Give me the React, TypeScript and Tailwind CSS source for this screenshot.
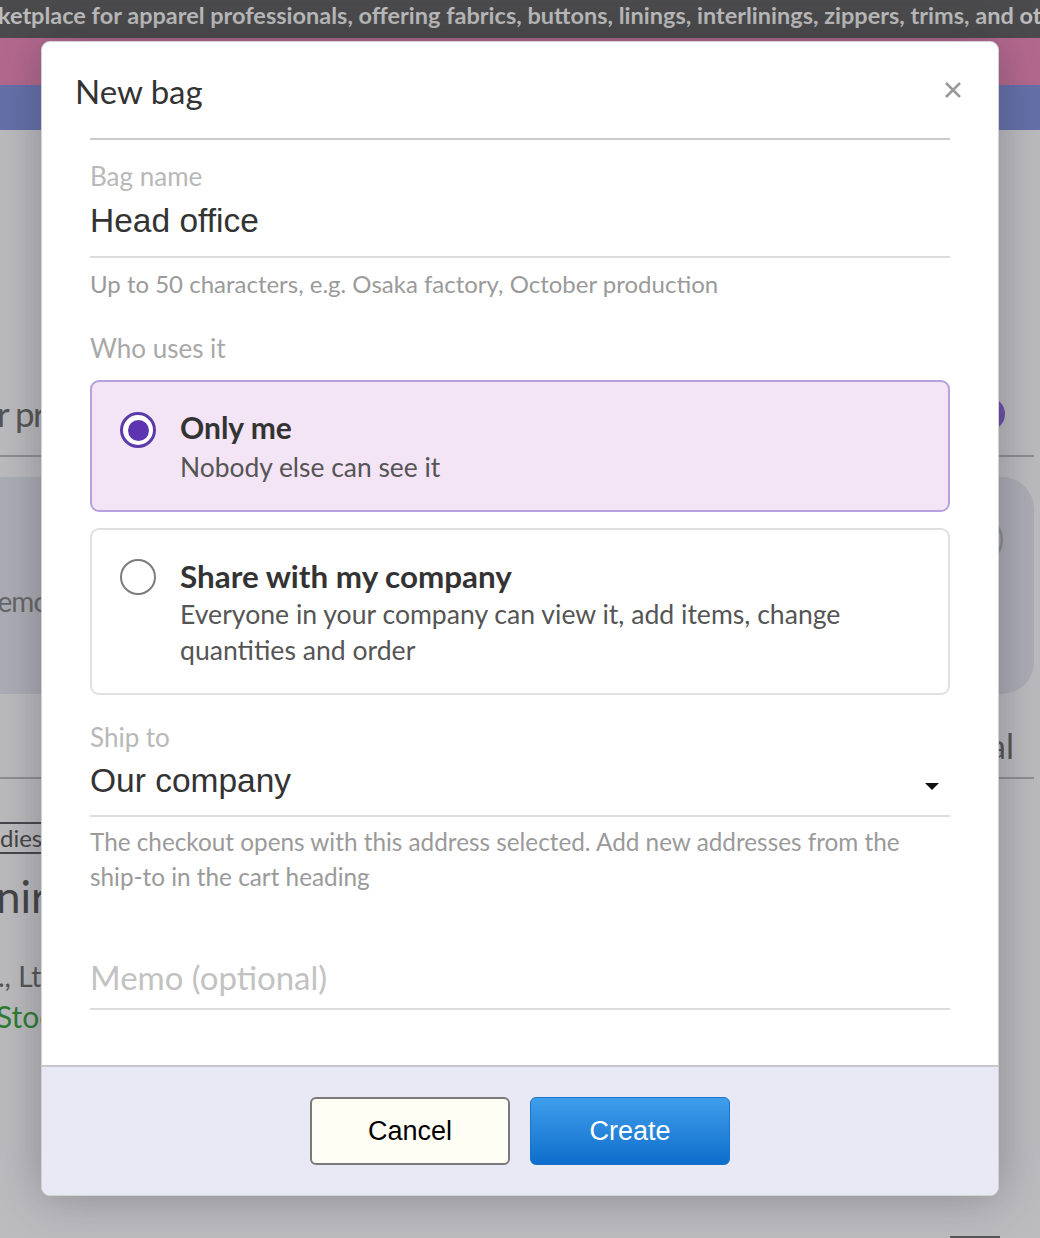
import React from "react";

function CloseIcon() {
  return (
    <svg width="20" height="20" viewBox="0 0 20 20" aria-hidden="true">
      <path d="M3 3 L17 17 M17 3 L3 17" stroke="#9a9a9a" strokeWidth="2.6" strokeLinecap="butt" />
    </svg>
  );
}

function Caret() {
  return (
    <svg width="16" height="9" viewBox="0 0 16 9" aria-hidden="true">
      <path d="M1 1 L15 1 L8 8 Z" fill="#111" />
    </svg>
  );
}

function Radio({ checked }: { checked: boolean }) {
  if (checked) {
    return (
      <span className="flex h-9 w-9 shrink-0 items-center justify-center rounded-full border-[3px] border-[#5b3aa9] bg-white">
        <span className="block h-[21px] w-[21px] rounded-full bg-[#5e35b1]" />
      </span>
    );
  }
  return <span className="block h-9 w-9 shrink-0 rounded-full border-2 border-[#7c7c7c] bg-white" />;
}

function BackgroundPage() {
  return (
    <div className="flex h-full flex-col">
      <div className="h-[38px] overflow-hidden whitespace-nowrap bg-[#4b4b4d] text-[23.5px] font-bold leading-[31px] text-[#bdbdbd]">
        <span className="-ml-[2px]">
          ketplace for apparel professionals, offering fabrics, buttons, linings, interlinings, zippers, trims, and other supplies
        </span>
      </div>
      <div className="h-[47px] bg-[#b4698e]" />
      <div className="h-[45px] bg-[#6570aa]" />
      <div className="flex flex-1 flex-col bg-[#bcbcbf] pr-[6px]">
        {/* heading row with avatar */}
        <div className="mt-[263px] flex h-[64px] items-center justify-between border-b-2 border-[#8f8f92]">
          <span className="-ml-[3px] mb-[22px] text-[35px] leading-none tracking-[-1.5px] text-[#555]">r products</span>
          <span className="mb-[20px] mr-[29px] block h-[34px] w-[34px] rounded-full bg-[#6b4fa9]" />
        </div>
        {/* summary card */}
        <div className="mt-[20px] flex h-[217px] items-center justify-between rounded-r-[32px] bg-[#adadb6]">
          <span className="-ml-[27px] mt-[30px] text-[28px] tracking-[-1px] text-[#666]">Memo</span>
          <span className="mr-[30px] -mt-[95px] text-[28px] text-[#8a8a90]">)</span>
        </div>
        {/* total row */}
        <div className="flex h-[85px] items-end justify-end border-b-2 border-[#8f8f92] pb-[14px]">
          <span className="mr-[20px] text-[34px] leading-none text-[#555]">Total</span>
        </div>
        {/* product entry */}
        <div className="mt-[43px] flex flex-col items-start">
          <span className="-ml-[2px] border-y-2 border-[#45474d] px-[2px] text-[24px] leading-[28px] text-[#444]">dies</span>
          <span className="-ml-[4px] mt-[18px] text-[44px] leading-[48px] text-[#444]">nir</span>
          <span className="-ml-[2px] mt-[38px] text-[28px] leading-[36px] text-[#555]">., Ltd</span>
          <span className="-ml-[4px] mt-[4px] text-[30px] leading-[36px] text-[#2e7d32]">Stock</span>
        </div>
        <div className="mt-auto flex justify-end">
          <span className="mr-[34px] block h-[2px] w-[50px] bg-[#55565a]" />
        </div>
      </div>
    </div>
  );
}

export default function App() {
  return (
    <div className="relative h-[1238px] w-[1040px] overflow-hidden font-['Lato','Open_Sans',sans-serif]">
      <BackgroundPage />

      {/* modal layer */}
      <div className="absolute inset-0 flex justify-center pt-[41px]">
        <div className="flex h-[1155px] w-[958px] flex-col overflow-hidden rounded-[9px] border border-[#d2d2d6] bg-white shadow-[0_0_48px_rgba(40,40,50,0.35)]">
          {/* header */}
          <div className="flex h-[96px] items-start justify-between pl-[33px] pr-[35px] pt-[29px]">
            <h2 className="text-[33px] font-normal leading-[40px] text-[#333]">New bag</h2>
            <button className="mt-[9px] flex h-[20px] w-[20px] items-center justify-center">
              <CloseIcon />
            </button>
          </div>
          <div className="mx-[48px] h-[2px] bg-[#cacaca]" />

          {/* body */}
          <div className="flex flex-1 flex-col px-[48px]">
            <label className="mt-[21px] text-[26px] leading-[30px] text-[#b8b8b8]">Bag name</label>
            <div className="mt-[10px] border-b-2 border-[#dcdcdc] pb-[15px]">
              <div className="font-['Liberation_Sans',Arial,sans-serif] text-[33.5px] leading-[40px] text-[#333]">Head office</div>
            </div>
            <p className="mt-[11px] text-[24px] leading-[30px] text-[#9a9a9a]">
              Up to 50 characters, e.g. Osaka factory, October production
            </p>

            <p className="mt-[34px] text-[26px] leading-[30px] text-[#a8a8a8]">Who uses it</p>

            <div className="mt-[17px] flex h-[132px] gap-[24px] rounded-[9px] border-2 border-[#b7a1dc] bg-[#f3e4f6] pl-[28px] pt-[25px]">
              <div className="mt-[5px]">
                <Radio checked />
              </div>
              <div className="flex flex-col">
                <span className="text-[30px] font-bold leading-[40px] text-[#333]">Only me</span>
                <span className="text-[26.4px] leading-[40px] text-[#555]">Nobody else can see it</span>
              </div>
            </div>

            <div className="mt-[16px] flex h-[167px] gap-[24px] rounded-[9px] border-2 border-[#e0e0e0] bg-white pl-[28px] pr-[40px] pt-[26px]">
              <div className="mt-[3px]">
                <Radio checked={false} />
              </div>
              <div className="flex flex-col">
                <span className="text-[31.4px] font-bold leading-[40px] text-[#333]">Share with my company</span>
                <span className="text-[26.6px] leading-[36px] text-[#555]">
                  Everyone in your company can view it, add items, change quantities and order
                </span>
              </div>
            </div>

            <label className="mt-[27px] text-[26px] leading-[30px] text-[#b8b8b8]">Ship to</label>
            <div className="mt-[9px] flex items-center justify-between border-b-2 border-[#dcdcdc] pb-[14px]">
              <span className="font-['Liberation_Sans',Arial,sans-serif] text-[33.5px] leading-[40px] text-[#333]">Our company</span>
              <span className="mr-[10px] mt-[10px]">
                <Caret />
              </span>
            </div>
            <p className="mt-[7px] pr-[30px] text-[24.3px] leading-[35px] text-[#9a9a9a]">
              The checkout opens with this address selected. Add new addresses from the ship-to in the cart heading
            </p>

            <div className="mt-[63px] border-b-2 border-[#dcdcdc] pb-[11px]">
              <span className="text-[33px] leading-[40px] text-[#c2c2c2]">Memo (optional)</span>
            </div>
          </div>

          {/* footer */}
          <div className="flex h-[130px] justify-center gap-[20px] border-t-2 border-[#c6c6cc] bg-[#e8e9f5] pt-[30px]">
            <button className="h-[68px] w-[200px] rounded-[6px] border-2 border-[#7a7a7a] bg-[#fefef5] font-['Liberation_Sans',Arial,sans-serif] text-[27px] text-black">
              Cancel
            </button>
            <button className="h-[68px] w-[200px] rounded-[6px] border border-[#1b74c9] bg-linear-to-b from-[#3f9eec] to-[#0a6ecb] font-['Liberation_Sans',Arial,sans-serif] text-[27px] text-white">
              Create
            </button>
          </div>
        </div>
      </div>
    </div>
  );
}
